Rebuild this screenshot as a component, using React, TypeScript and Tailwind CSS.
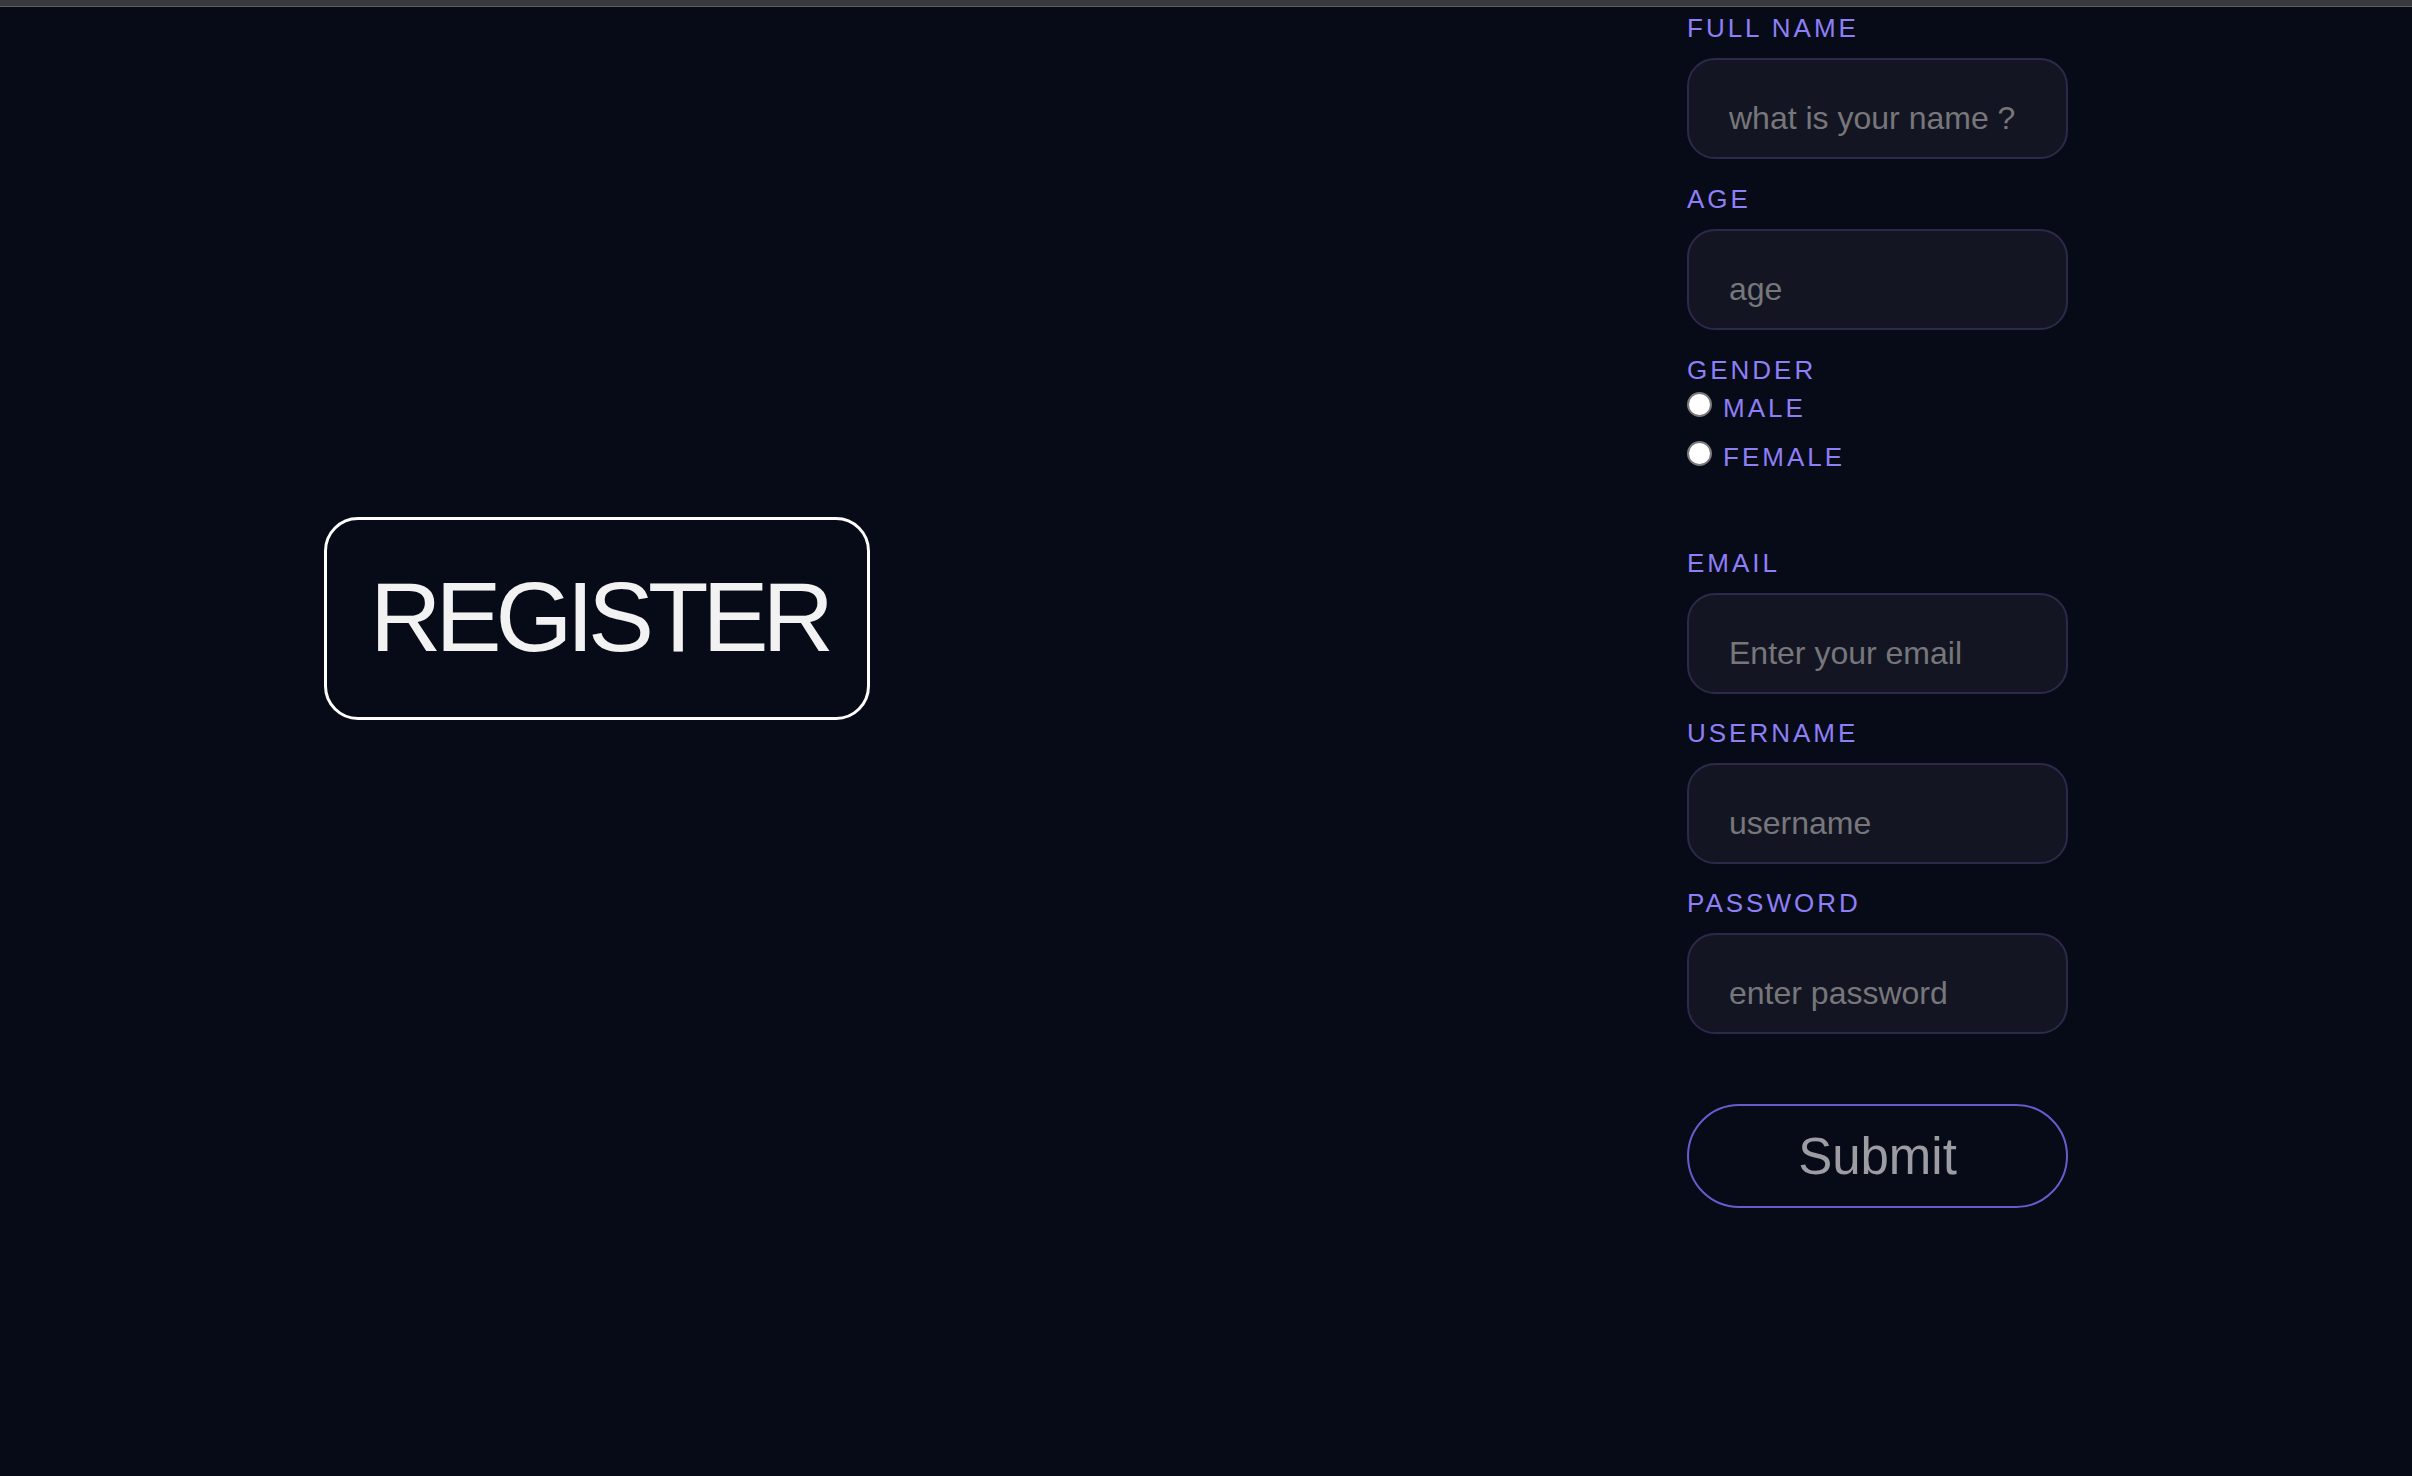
import React from "react";

function Label({ children }: { children: React.ReactNode }) {
  return (
    <label className="block text-[26px] leading-[30px] tracking-[3px] text-[#8e7ff6]">
      {children}
    </label>
  );
}

function Field({
  label,
  placeholder,
  type = "text",
  className = "",
}: {
  label: string;
  placeholder: string;
  type?: string;
  className?: string;
}) {
  return (
    <div className={"flex flex-col " + className}>
      <Label>{label}</Label>
      <input
        type={type}
        placeholder={placeholder}
        className="mt-[15px] box-border h-[101px] w-full rounded-[28px] border-2 border-[#2c2949] bg-[#131622] pl-[40px] pr-[20px] pt-[40px] pb-[21px] text-[32px] leading-[36px] text-[#cfcfd4] placeholder:text-[#77777b] outline-none"
      />
    </div>
  );
}

function Radio({ label, className = "" }: { label: string; className?: string }) {
  return (
    <label className={"flex h-[30px] items-start " + className}>
      <input
        type="radio"
        name="gender"
        className="m-0 -mt-[1px] h-[25px] w-[25px] shrink-0 appearance-none rounded-full border-2 border-[#7a7a7a] bg-white"
      />
      <span className="ml-[11px] text-[26px] leading-[30px] tracking-[3px] text-[#8e7ff6]">
        {label}
      </span>
    </label>
  );
}

export default function App() {
  return (
    <div className="min-h-screen bg-[#070b17] font-['Liberation_Sans',Arial,sans-serif]">
      <div className="h-[6px] bg-[#38393c]" />
      <div className="h-[1px] bg-[#5f5f62]" />
      <div className="flex">
        <div className="ml-[324px] mt-[510px] box-border flex h-[203px] w-[546px] shrink-0 items-center justify-center rounded-[34px] border-[3px] border-white pb-[4px] pl-[4px]">
          <h1 className="whitespace-nowrap text-[99px] leading-none tracking-[-6px] text-[#f2f2f2]">
            REGISTER
          </h1>
        </div>
        <form className="ml-auto mr-[344px] flex w-[381px] flex-col pt-[6px]">
          <Field label="FULL NAME" placeholder="what is your name ?" className="mb-[25px]" />
          <Field label="AGE" placeholder="age" className="mb-[25px]" />
          <Label>GENDER</Label>
          <Radio label="MALE" className="mt-[8px]" />
          <Radio label="FEMALE" className="mt-[19px]" />
          <Field label="EMAIL" placeholder="Enter your email" type="email" className="mt-[76px] mb-[24px]" />
          <Field label="USERNAME" placeholder="username" className="mb-[24px]" />
          <Field label="PASSWORD" placeholder="enter password" type="password" />
          <button
            type="submit"
            className="mt-[70px] box-border h-[104px] w-full rounded-full border-2 border-[#6a5acd] bg-transparent text-[51px] leading-none text-[#9c9ca2]"
          >
            Submit
          </button>
        </form>
      </div>
    </div>
  );
}
